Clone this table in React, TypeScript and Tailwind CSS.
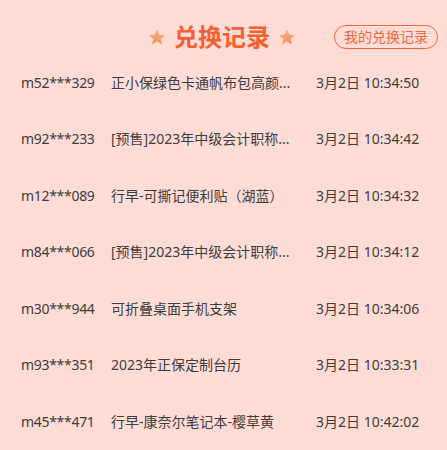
import React from "react";

const rows = [
  ["m52***329", "正小保绿色卡通帆布包高颜...", "3月2日 10:34:50"],
  ["m92***233", "[预售]2023年中级会计职称...", "3月2日 10:34:42"],
  ["m12***089", "行早-可撕记便利贴（湖蓝）", "3月2日 10:34:32"],
  ["m84***066", "[预售]2023年中级会计职称...", "3月2日 10:34:12"],
  ["m30***944", "可折叠桌面手机支架", "3月2日 10:34:06"],
  ["m93***351", "2023年正保定制台历", "3月2日 10:33:31"],
  ["m45***471", "行早-康奈尔笔记本-樱草黄", "3月2日 10:42:02"],
];

function Star() {
  return (
    <svg width="18" height="17" viewBox="0 0 24 23">
      <defs>
        <linearGradient id="sg" x1="0" y1="0" x2="0" y2="1">
          <stop offset="0" stopColor="#f7b285" />
          <stop offset="1" stopColor="#f48f5f" />
        </linearGradient>
      </defs>
      <path
        d="M12 0.5l3.1 7.1 7.7 0.7-5.8 5.1 1.8 7.6L12 17l-6.8 4 1.8-7.6-5.8-5.1 7.7-0.7z"
        fill="url(#sg)"
      />
    </svg>
  );
}

export default function App() {
  return (
    <div
      className="w-[447px] h-[450px] bg-[#ffdcd6] text-[#3d3d3d] overflow-hidden"
      style={{ fontFamily: '"Noto Sans", "Noto Sans CJK SC", sans-serif' }}
    >
      <div className="relative h-[54px] pt-[25px]">
        <div className="flex items-center justify-center gap-[8px] h-[24px] pr-[3px]">
          <Star />
          <span className="text-[24px] font-bold text-[#f4602f] leading-[24px]">兑换记录</span>
          <Star />
        </div>
        <div className="absolute right-[9px] top-[25px] h-[24px] w-[104px] rounded-full border border-[#f4683a] text-[#f26a3c] text-[14px] flex items-center justify-center leading-none">
          我的兑换记录
        </div>
      </div>
      <div className="flex flex-col">
        {rows.map((r, i) => (
          <div key={i} className="flex items-center h-[56.5px] text-[14px]">
            <span className="w-[111px] pl-[21px] shrink-0 tracking-[-0.3px]">{r[0]}</span>
            <span className="w-[181px] whitespace-nowrap shrink-0">{r[1]}</span>
            <span className="ml-[24px] whitespace-nowrap">{r[2]}</span>
          </div>
        ))}
      </div>
    </div>
  );
}
